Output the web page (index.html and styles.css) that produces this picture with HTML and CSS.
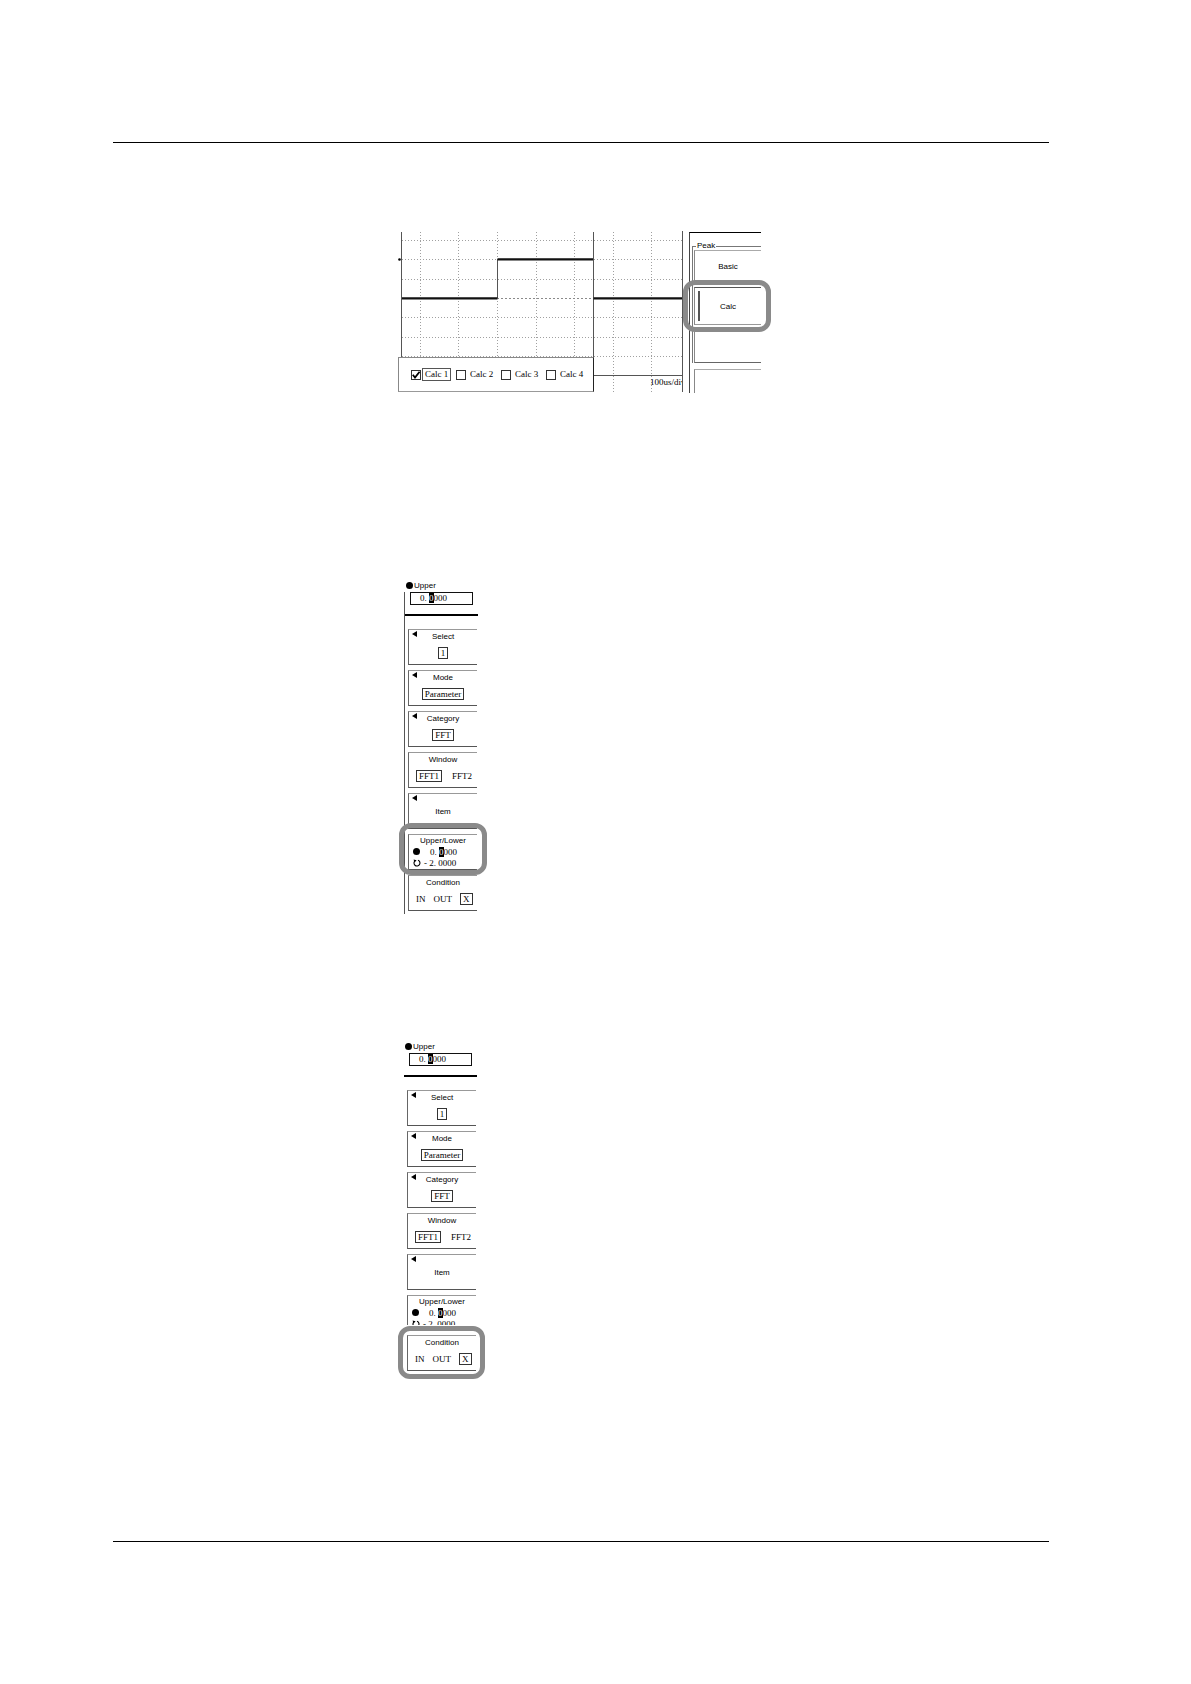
FILE: index.html
```html
<!DOCTYPE html>
<html>
<head>
<meta charset="utf-8">
<link rel="stylesheet" href="styles.css">
</head>
<body>
<div class="page">
  <div class="rule rule-top"></div>

  <div class="fig fig-scope">
    <div class="scope">
      <svg class="grid" width="284" height="161" viewBox="0 0 284 161">
        <g stroke="#a0a0a0" stroke-width="1" stroke-dasharray="1 2" fill="none">
          <path d="M22.5 1V161M60.5 1V161M99.5 1V161M138.5 1V161M176.5 1V161M215.5 1V161M253.5 1V161"/>
          <path d="M4 9.5H284M4 28.5H284M4 48.5H284M4 86.5H284M4 106.5H284M4 125.5H284"/>
        </g>
        <g stroke="#555" stroke-width="1" fill="none">
          <path d="M3.5 1V161M195.5 1V161M196 144.5H284"/>
        </g>
        <path d="M99 67.5H195" stroke="#8a8a8a" stroke-width="1" stroke-dasharray="2 2" fill="none"/>
        <path d="M99.5 28V67" stroke="#555" stroke-width="1" fill="none"/>
        <g stroke="#111" stroke-width="2.2" fill="none">
          <path d="M4 67.3H99.5M99.5 28.3H195M195.5 67.3H284"/>
        </g>
        <circle cx="1.5" cy="28.5" r="1.3" fill="#000"/>
      </svg>
      <div class="timebase">100us/div</div>
      <div class="calcbar">
        <div class="calc-item">
          <span class="chk"><svg width="10" height="10" viewBox="0 0 10 10"><path d="M1.8 4.8L4 7.6L8.6 1.8" fill="none" stroke="#000" stroke-width="1.8"/></svg></span>
          <span class="calc-label focus">Calc 1</span>
        </div>
        <div class="calc-item"><span class="chk"></span><span class="calc-label">Calc 2</span></div>
        <div class="calc-item"><span class="chk"></span><span class="calc-label">Calc 3</span></div>
        <div class="calc-item"><span class="chk"></span><span class="calc-label">Calc 4</span></div>
      </div>
    </div>
    <div class="panel">
      <div class="panel-inner">
        <div class="peak">
          <span class="peak-legend">Peak</span>
          <div class="pbtn pbtn-basic">Basic</div>
          <div class="pbtn pbtn-calc">Calc</div>
          <div class="pbtn pbtn-empty"></div>
        </div>
        <div class="pbtn pbtn-next"></div>
      </div>
      <div class="hl hl-calc"></div>
    </div>
  </div>

  <div class="fig fig-menu menu-a">
    <div class="upper-label"><span class="dot"></span>Upper</div>
    <div class="menu-body edge">
      <div class="upper-input">0. <span class="cur">0</span>000</div>
      <div class="menu-sep"></div>
      <div class="mbtn"><span class="tri"></span><div class="mlabel">Select</div><div class="mval"><span class="box">1</span></div></div>
      <div class="mbtn"><span class="tri"></span><div class="mlabel">Mode</div><div class="mval"><span class="box">Parameter</span></div></div>
      <div class="mbtn"><span class="tri"></span><div class="mlabel">Category</div><div class="mval"><span class="box">FFT</span></div></div>
      <div class="mbtn"><div class="mlabel">Window</div><div class="mval mval-win"><span class="box">FFT1</span><span>FFT2</span></div></div>
      <div class="mbtn"><span class="tri"></span><div class="mlabel mlabel-item">Item</div></div>
      <div class="mbtn mbtn-ul">
        <div class="mlabel">Upper/Lower</div>
        <div class="ulrow"><span class="dot dot-sm"></span><span class="ulval">0. <span class="cur">0</span>000</span></div>
        <div class="ulrow ulrow-2"><svg class="rot" width="8" height="8" viewBox="0 0 8 8"><path d="M2.2 1.6A3 3 0 1 0 5 1.2" fill="none" stroke="#000" stroke-width="1.1"/><path d="M0.6 0.4L3.6 1.2L1.4 3.4Z" fill="#000"/></svg><span class="ulval2">- 2. 0000</span></div>
      </div>
      <div class="mbtn"><div class="mlabel">Condition</div><div class="mval mval-cond"><span>IN</span><span>OUT</span><span class="box">X</span></div></div>
    </div>
    <div class="hl hl-ul"></div>
  </div>

  <div class="fig fig-menu menu-b">
    <div class="upper-label"><span class="dot"></span>Upper</div>
    <div class="menu-body">
      <div class="upper-input">0. <span class="cur">0</span>000</div>
      <div class="menu-sep"></div>
      <div class="mbtn"><span class="tri"></span><div class="mlabel">Select</div><div class="mval"><span class="box">1</span></div></div>
      <div class="mbtn"><span class="tri"></span><div class="mlabel">Mode</div><div class="mval"><span class="box">Parameter</span></div></div>
      <div class="mbtn"><span class="tri"></span><div class="mlabel">Category</div><div class="mval"><span class="box">FFT</span></div></div>
      <div class="mbtn"><div class="mlabel">Window</div><div class="mval mval-win"><span class="box">FFT1</span><span>FFT2</span></div></div>
      <div class="mbtn"><span class="tri"></span><div class="mlabel mlabel-item">Item</div></div>
      <div class="mbtn mbtn-ul mbtn-cut">
        <div class="mlabel">Upper/Lower</div>
        <div class="ulrow"><span class="dot dot-sm"></span><span class="ulval">0. <span class="cur">0</span>000</span></div>
        <div class="ulrow ulrow-2"><svg class="rot" width="8" height="8" viewBox="0 0 8 8"><path d="M2.2 1.6A3 3 0 1 0 5 1.2" fill="none" stroke="#000" stroke-width="1.1"/><path d="M0.6 0.4L3.6 1.2L1.4 3.4Z" fill="#000"/></svg><span class="ulval2">- 2. 0000</span></div>
      </div>
      <div class="mbtn mbtn-cond"><div class="mlabel">Condition</div><div class="mval mval-cond"><span>IN</span><span>OUT</span><span class="box">X</span></div></div>
    </div>
    <div class="hl hl-cond"></div>
  </div>

  <div class="rule rule-bottom"></div>
</div>
</body>
</html>
```

FILE: styles.css
```css
html, body {
  margin: 0;
  padding: 0;
  background: #fff;
}
body {
  font-family: "Liberation Sans", Arial, sans-serif;
  color: #000;
}
.page {
  width: 1191px;
  height: 1684px;
  overflow: hidden;
  display: flow-root;
}
.rule {
  width: 936px;
  margin-left: 113px;
  border-top: 1.5px solid #000;
}
.rule-top { margin-top: 142px; }
.rule-bottom { margin-top: 159px; }

.fig { position: relative; }

/* ---------- figure 1: scope + soft key panel ---------- */
.fig-scope {
  margin-top: 88px;
  margin-left: 398px;
  width: 363px;
  height: 161px;
  display: flex;
}
.scope {
  position: relative;
  width: 284px;
  height: 161px;
  overflow: hidden;
  flex: none;
}
.grid { display: block; }
.timebase {
  position: absolute;
  left: 252px;
  top: 145px;
  font-family: "Liberation Serif", serif;
  font-size: 9px;
  line-height: 12px;
  white-space: nowrap;
  color: #000;
}
.calcbar {
  position: absolute;
  left: 0;
  top: 126px;
  width: 196px;
  height: 35px;
  box-sizing: border-box;
  background: #fff;
  border: 1px solid #888;
  border-right-color: #222;
  border-bottom-color: #999;
  display: flex;
  align-items: center;
  padding-left: 12px;
}
.calc-item {
  width: 45px;
  display: flex;
  align-items: center;
  gap: 1px;
  flex: none;
}
.chk {
  width: 10px;
  height: 10px;
  box-sizing: border-box;
  border: 1px solid #333;
  display: flex;
  align-items: center;
  justify-content: center;
  flex: none;
}
.chk svg { display: block; margin: -1px; }
.calc-label {
  font-family: "Liberation Serif", serif;
  font-size: 9px;
  line-height: 11px;
  padding: 0 2px;
  border: 1px solid transparent;
  white-space: nowrap;
  color: #000;
}
.calc-label.focus { border-color: #555; }

.panel {
  position: relative;
  width: 79px;
  height: 161px;
  flex: none;
  box-sizing: border-box;
  border-left: 1px solid #555;
}
.panel-inner {
  margin-left: 6px;
  height: 160px;
  margin-top: 1px;
  border-left: 1px solid #444;
  border-top: 1px solid #000;
  overflow: hidden;
}
.peak {
  position: relative;
  margin-top: 13px;
  margin-left: 2px;
  border-top: 1px solid #777;
  border-left: 1px solid #777;
  padding-top: 3px;
  padding-left: 1px;
}
.peak-legend {
  position: absolute;
  left: 3px;
  top: -6px;
  background: #fff;
  padding: 0 1px;
  font-size: 8px;
  line-height: 10px;
}
.pbtn {
  position: relative;
  box-sizing: border-box;
  border-top: 1px solid #aaa;
  border-left: 1px solid #888;
  border-bottom: 1px solid #666;
  font-size: 8px;
  display: flex;
  align-items: center;
  justify-content: center;
}
.pbtn-basic { height: 33px; }
.pbtn-calc { height: 38px; margin-top: 4px; border-top-color: #555; border-bottom-color: #999; }
.pbtn-calc::before {
  content: "";
  position: absolute;
  left: 3px;
  top: 3px;
  bottom: 3px;
  width: 2px;
  background: #555;
}
.pbtn-empty { height: 35px; margin-top: 3px; }
.pbtn-next { height: 40px; margin-top: 6px; margin-left: 4px; border-bottom: none; }

.hl {
  position: absolute;
  box-sizing: border-box;
  border: 5px solid #8a8a8a;
  border-radius: 12px;
}
.hl-calc {
  left: 0;
  top: 49px;
  width: 88px;
  height: 52px;
}

/* ---------- menus ---------- */
.fig-menu { width: 74px; }
.menu-a {
  margin-top: 189px;
  margin-left: 404px;
  height: 331px;
}
.menu-b {
  margin-top: 130px;
  margin-left: 403px;
  height: 340px;
}
.upper-label {
  height: 9px;
  font-size: 8px;
  line-height: 9px;
  display: flex;
  align-items: center;
  padding-left: 2px;
  gap: 1px;
}
.dot {
  width: 7px;
  height: 7px;
  border-radius: 50%;
  background: #000;
  flex: none;
}
.menu-body {
  border-left: 1px solid transparent;
  height: 322px;
}
.menu-body.edge { border-left-color: #555; }
.upper-input {
  margin-top: 2px;
  margin-left: 5px;
  width: 63px;
  height: 13px;
  box-sizing: border-box;
  border: 1px solid #111;
  font-family: "Liberation Serif", serif;
  font-size: 9px;
  line-height: 11px;
  padding-left: 9px;
  white-space: nowrap;
}
.cur {
  background: #000;
  color: #fff;
}
.menu-sep {
  margin-top: 9px;
  width: 73px;
  height: 2px;
  background: #000;
}
.mbtn {
  position: relative;
  margin-top: 5px;
  margin-left: 3px;
  width: 69px;
  height: 36px;
  box-sizing: border-box;
  border-top: 1px solid #999;
  border-left: 1px solid #666;
  border-bottom: 1px solid #555;
}
.menu-sep + .mbtn { margin-top: 13px; }
.tri {
  position: absolute;
  left: 3px;
  top: 1px;
  width: 0;
  height: 0;
  border-top: 3px solid transparent;
  border-bottom: 3px solid transparent;
  border-right: 5px solid #000;
}
.mlabel {
  font-size: 8px;
  line-height: 10px;
  padding-top: 2px;
  text-align: center;
  white-space: nowrap;
}
.mlabel-item { padding-top: 13px; }
.mval {
  margin-top: 5px;
  height: 12px;
  display: flex;
  justify-content: center;
  align-items: center;
  font-family: "Liberation Serif", serif;
  font-size: 9px;
  line-height: 10px;
  white-space: nowrap;
}
.box {
  border: 1px solid #333;
  padding: 0 2px;
}
.mval-win {
  justify-content: flex-start;
  padding-left: 7px;
  gap: 10px;
}
.mval-cond {
  justify-content: flex-start;
  padding-left: 7px;
  gap: 8px;
}
.mbtn-ul .mlabel { padding-top: 1px; }
.ulrow {
  display: flex;
  align-items: center;
  height: 11px;
  padding-left: 4px;
  font-family: "Liberation Serif", serif;
  font-size: 9px;
  line-height: 10px;
  white-space: nowrap;
}
.dot-sm { width: 7px; height: 7px; }
.ulval { margin-left: 10px; }
.rot { display: block; flex: none; }
.ulval2 { margin-left: 3px; }
.hl-ul {
  left: -5px;
  top: 242px;
  width: 88px;
  height: 52px;
}
.mbtn-cut {
  height: 30px;
  overflow: hidden;
  border-bottom: none;
}
.mbtn-cond { margin-top: 10px; height: 36px; }
.hl-cond {
  left: -5px;
  top: 284px;
  width: 87px;
  height: 53px;
}
```
